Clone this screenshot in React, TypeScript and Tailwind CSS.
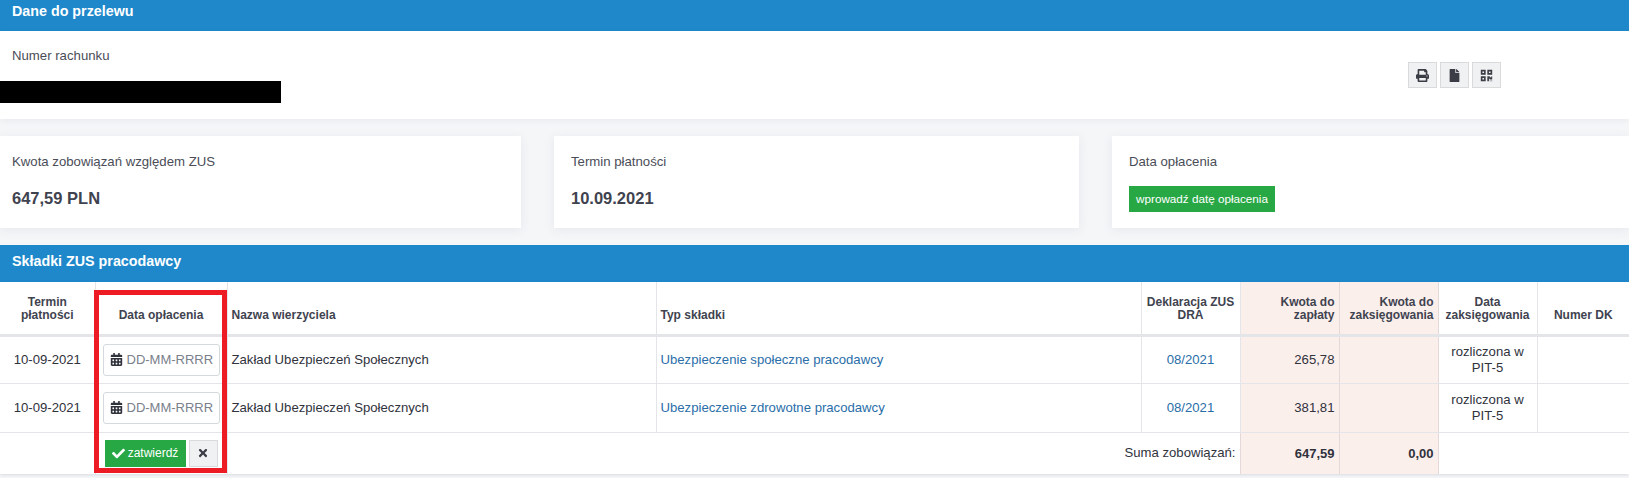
import { FaCalendarAlt, FaCheck, FaFile, FaPrint, FaQrcode, FaTimes } from 'react-icons/fa'

const rows = [
  { typ: 'Ubezpieczenie społeczne pracodawcy', kwota: '265,78', h: 'h-[48px]' },
  { typ: 'Ubezpieczenie zdrowotne pracodawcy', kwota: '381,81', h: 'h-[49px]' },
]

const thBase = 'border-r border-[#e3e5e8] border-b-[3px] border-b-[#e3e5e8] px-1 pb-[12px] align-bottom font-bold text-[12px] leading-[13px] text-[#3f4350]'
const tdBase = 'border-r border-b border-[#e3e5e8] px-1 align-middle text-[13.15px]'
const pink = 'bg-[#fbefec] border-r-[#e4d8d8]'

function SmallButton({ children }: { children: React.ReactNode }) {
  return (
    <button className="flex h-[26px] w-[29px] items-center justify-center border border-[#d8dadc] bg-[#f0f1f3] text-[13px] text-[#3a3d46]">
      {children}
    </button>
  )
}

function DateInput() {
  return (
    <div className="mx-auto flex h-[32px] w-[117px] items-center gap-[4px] rounded-[3px] border border-[#d5d8dc] bg-white pl-[6px] text-[13px] text-[#7a808c]">
      <FaCalendarAlt className="text-[13px] text-[#30323c]" />
      <span>DD-MM-RRRR</span>
    </div>
  )
}

function Card({ width, pad, label, children }: { width: string; pad: string; label: string; children: React.ReactNode }) {
  return (
    <div className={`${width} ${pad} h-[92px] shrink-0 bg-white pt-[18px] shadow-[0_2px_10px_rgba(60,70,90,0.08)]`}>
      <div className="text-[13.2px] leading-[16px] text-[#4a4d57]">{label}</div>
      {children}
    </div>
  )
}

export default function App() {
  return (
    <div className="relative h-[478px] w-[1629px] overflow-hidden bg-[#f5f6f8]" style={{ fontFamily: '"Liberation Sans", Arial, sans-serif' }}>
      {/* Dane do przelewu */}
      <div className="h-[31px] bg-[#1e88cb] px-3 text-[14.3px] font-bold leading-[22px] text-white">Dane do przelewu</div>
      <div className="flex h-[88px] justify-between bg-white shadow-[0_2px_6px_rgba(60,70,90,0.06)]">
        <div>
          <div className="pl-3 pt-[17px] text-[13.2px] leading-[16px] text-[#4a4d57]">Numer rachunku</div>
          <div className="mt-[17px] h-[22px] w-[281px] bg-black"></div>
        </div>
        <div className="mr-[128px] mt-[31px] flex gap-[3px]">
          <SmallButton><FaPrint /></SmallButton>
          <SmallButton><FaFile /></SmallButton>
          <SmallButton><FaQrcode /></SmallButton>
        </div>
      </div>

      {/* Karty */}
      <div className="mt-[17px] flex gap-[33px]">
        <Card width="w-[521px]" pad="pl-3" label="Kwota zobowiązań względem ZUS">
          <div className="mt-[18px] text-[16.5px] font-bold leading-[20px] text-[#3f4350]">647,59 PLN</div>
        </Card>
        <Card width="w-[525px]" pad="pl-[17px]" label="Termin płatności">
          <div className="mt-[18px] text-[16.5px] font-bold leading-[20px] text-[#3f4350]">10.09.2021</div>
        </Card>
        <Card width="w-[517px]" pad="pl-[17px]" label="Data opłacenia">
          <button className="mt-[16px] flex h-[26px] w-[146px] items-center justify-center bg-[#28a745] text-[11.7px] text-white">wprowadź datę opłacenia</button>
        </Card>
      </div>

      {/* Składki */}
      <div className="mt-[17px] h-[37px] bg-[#1e88cb] px-3 text-[14.3px] font-bold leading-[33px] text-white">Składki ZUS pracodawcy</div>
      <table className="w-[1629px] table-fixed border-collapse bg-white shadow-[0_1px_3px_rgba(60,70,90,0.15)]">
        <colgroup>
          <col className="w-[95px]" />
          <col className="w-[132px]" />
          <col className="w-[429px]" />
          <col className="w-[485px]" />
          <col className="w-[99px]" />
          <col className="w-[99px]" />
          <col className="w-[99px]" />
          <col className="w-[99px]" />
          <col className="w-[92px]" />
        </colgroup>
        <thead>
          <tr className="h-[53px]">
            <th className={`${thBase} text-center`}>Termin płatności</th>
            <th className={`${thBase} text-center`}>Data opłacenia</th>
            <th className={`${thBase} text-left`}>Nazwa wierzyciela</th>
            <th className={`${thBase} text-left`}>Typ składki</th>
            <th className={`${thBase} text-center`}>Deklaracja ZUS DRA</th>
            <th className={`${thBase} ${pink} text-right`}>Kwota do zapłaty</th>
            <th className={`${thBase} ${pink} text-right`}>Kwota do zaksięgowania</th>
            <th className={`${thBase} text-center`}>Data zaksięgowania</th>
            <th className={`${thBase} border-r-0 text-center`}>Numer DK</th>
          </tr>
        </thead>
        <tbody>
          {rows.map(r => (
            <tr key={r.typ} className={r.h}>
              <td className={`${tdBase} text-center text-[#30323c]`}>10-09-2021</td>
              <td className={tdBase}><DateInput /></td>
              <td className={`${tdBase} text-[#30323c]`}>Zakład Ubezpieczeń Społecznych</td>
              <td className={`${tdBase} text-[#2a6ea8]`}>{r.typ}</td>
              <td className={`${tdBase} text-center text-[#2a6ea8]`}>08/2021</td>
              <td className={`${tdBase} ${pink} text-right text-[#30323c]`}>{r.kwota}</td>
              <td className={`${tdBase} ${pink}`}></td>
              <td className={`${tdBase} text-center leading-[16px] text-[#30323c]`}>rozliczona w PIT-5</td>
              <td className={`${tdBase} border-r-0`}></td>
            </tr>
          ))}
          <tr className="h-[42px]">
            <td className="border-r border-[#e3e5e8]"></td>
            <td className="border-r border-[#e3e5e8]">
              <div className="flex justify-center gap-[3px]">
                <button className="flex h-[27px] w-[81px] items-center justify-center gap-[3px] bg-[#28a745] text-[12px] text-white">
                  <FaCheck className="text-[13px]" />
                  zatwierdź
                </button>
                <button className="flex h-[27px] w-[29px] items-center justify-center border border-[#d8dadc] bg-[#f0f1f3] text-[12px] text-[#3a3d46]">
                  <FaTimes />
                </button>
              </div>
            </td>
            <td colSpan={3} className="px-1 text-right text-[13.15px] text-[#30323c]">Suma zobowiązań:</td>
            <td className={`${pink} border-r border-l border-[#e4d8d8] px-1 text-right text-[13px] font-bold text-[#30323c]`}>647,59</td>
            <td className={`${pink} border-r border-[#e4d8d8] px-1 text-right text-[13px] font-bold text-[#30323c]`}>0,00</td>
            <td colSpan={2}></td>
          </tr>
        </tbody>
      </table>

      {/* Czerwona ramka */}
      <div className="absolute left-[94px] top-[290px] h-[183px] w-[133px] border-[5px] border-[#ed1c24]"></div>
    </div>
  )
}
